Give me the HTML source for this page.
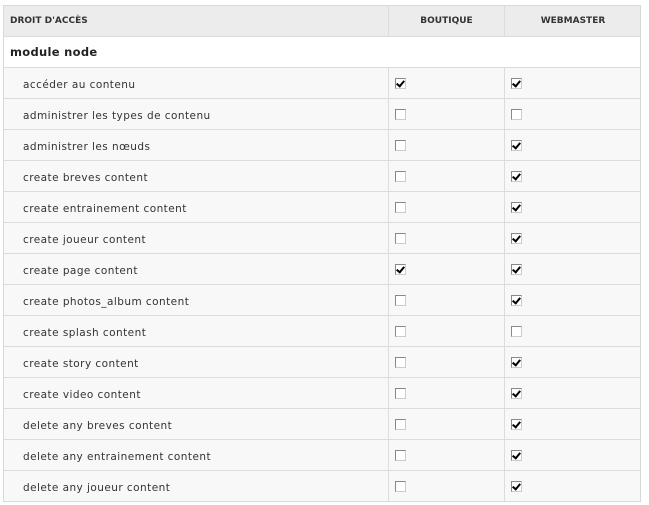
<!DOCTYPE html>
<html><head><meta charset="utf-8"><style>
html,body{margin:0;padding:0;background:#fff;width:649px;height:502px;overflow:hidden}
body{font-family:"DejaVu Sans","Liberation Sans",sans-serif;color:#222}
.t{position:absolute;left:3px;top:5px;width:636px;border-left:1px solid #d8d8d8;border-right:1px solid #d8d8d8}
.r{position:relative;height:30px;border-bottom:1px solid #dcdcdc;background:#f8f8f8}
.h{background:#ececec;border-top:1px solid #d8d8d8;height:30px}
.m{background:#fff}
.c{position:absolute;top:0;height:100%;line-height:34px}
.c1{left:0;width:384px}
.c2{left:384px;width:115px;border-left:1px solid #dcdcdc}
.c3{left:500px;width:136px;border-left:1px solid #dcdcdc}
.m .c2,.m .c3{border-left:none}
.h .c{font-size:9px;font-weight:bold;color:#333;line-height:31px}
.h .c1{padding-left:6px}
.h .c2,.h .c3{text-align:center}
.m .c1{font-weight:bold;font-size:11.5px;padding-left:6px;letter-spacing:0.3px;line-height:31px}
.r .t1{padding-left:19px;font-size:10.5px;color:#333;letter-spacing:0.45px}
.cb{position:absolute;top:10px;width:9px;height:9px;border:1px solid #888;border-right-color:#ccc;border-bottom-color:#ccc;background:#fff}
.c2 .cb{left:6px}.c3 .cb{left:6px}
.cb.k::after{content:"";position:absolute;left:2px;top:0px;width:3px;height:6px;border-right:2px solid #000;border-bottom:2px solid #000;transform:rotate(40deg)}
</style></head><body>
<div class="t">
<div class="r h"><div class="c c1">DROIT D'ACCÈS</div><div class="c c2">BOUTIQUE</div><div class="c c3">WEBMASTER</div></div>
<div class="r m"><div class="c c1">module node</div><div class="c c2"></div><div class="c c3"></div></div>
<div class="r"><div class="c c1 t1">accéder au contenu</div><div class="c c2"><span class="cb k"></span></div><div class="c c3"><span class="cb k"></span></div></div>
<div class="r"><div class="c c1 t1">administrer les types de contenu</div><div class="c c2"><span class="cb"></span></div><div class="c c3"><span class="cb"></span></div></div>
<div class="r"><div class="c c1 t1">administrer les nœuds</div><div class="c c2"><span class="cb"></span></div><div class="c c3"><span class="cb k"></span></div></div>
<div class="r"><div class="c c1 t1">create breves content</div><div class="c c2"><span class="cb"></span></div><div class="c c3"><span class="cb k"></span></div></div>
<div class="r"><div class="c c1 t1">create entrainement content</div><div class="c c2"><span class="cb"></span></div><div class="c c3"><span class="cb k"></span></div></div>
<div class="r"><div class="c c1 t1">create joueur content</div><div class="c c2"><span class="cb"></span></div><div class="c c3"><span class="cb k"></span></div></div>
<div class="r"><div class="c c1 t1">create page content</div><div class="c c2"><span class="cb k"></span></div><div class="c c3"><span class="cb k"></span></div></div>
<div class="r"><div class="c c1 t1">create photos_album content</div><div class="c c2"><span class="cb"></span></div><div class="c c3"><span class="cb k"></span></div></div>
<div class="r"><div class="c c1 t1">create splash content</div><div class="c c2"><span class="cb"></span></div><div class="c c3"><span class="cb"></span></div></div>
<div class="r"><div class="c c1 t1">create story content</div><div class="c c2"><span class="cb"></span></div><div class="c c3"><span class="cb k"></span></div></div>
<div class="r"><div class="c c1 t1">create video content</div><div class="c c2"><span class="cb"></span></div><div class="c c3"><span class="cb k"></span></div></div>
<div class="r"><div class="c c1 t1">delete any breves content</div><div class="c c2"><span class="cb"></span></div><div class="c c3"><span class="cb k"></span></div></div>
<div class="r"><div class="c c1 t1">delete any entrainement content</div><div class="c c2"><span class="cb"></span></div><div class="c c3"><span class="cb k"></span></div></div>
<div class="r"><div class="c c1 t1">delete any joueur content</div><div class="c c2"><span class="cb"></span></div><div class="c c3"><span class="cb k"></span></div></div>
</div>
</body></html>
